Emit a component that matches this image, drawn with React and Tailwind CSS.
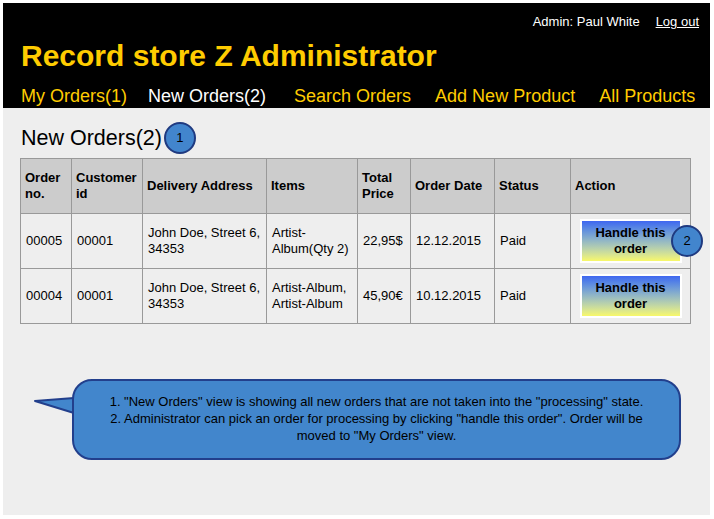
import React from 'react';

const orders = [
  { no: '00005', customer: '00001', address: ['John Doe, Street 6,', '34353'], items: ['Artist-', 'Album(Qty 2)'], price: '22,95$', date: '12.12.2015', status: 'Paid', badge: true },
  { no: '00004', customer: '00001', address: ['John Doe, Street 6,', '34353'], items: ['Artist-Album,', 'Artist-Album'], price: '45,90€', date: '10.12.2015', status: 'Paid', badge: false },
];

function Badge({ n, className = '' }) {
  return (
    <span className={`flex items-center justify-center w-[32px] h-[32px] rounded-full bg-[#4285cd] border-2 border-[#1f3a80] text-[13px] text-black ${className}`}>
      {n}
    </span>
  );
}

export default function App() {
  const th = 'border border-[#999999] px-[4px] text-left align-middle font-bold text-[13px] leading-[16px] text-black';
  const td = 'border border-[#999999] px-[5px] align-middle text-[13px] leading-[16px] text-black';

  return (
    <div className="bg-white min-h-[519px] pt-[3px] pl-[3px] pr-[4px] pb-[4px] font-['Liberation_Sans',Arial,sans-serif]">
      <div className="h-[512px] bg-[#eeeeee]">
        {/* header */}
        <div className="bg-black h-[105px] flex flex-col">
          <div className="flex justify-end gap-[16px] pr-[11px] pt-[11px] text-[13px] leading-[15px] text-white">
            <span>Admin: Paul White</span>
            <a href="#" className="underline">Log out</a>
          </div>
          <h1 className="pl-[18px] mt-[10px] text-[30px] leading-[34px] font-bold text-[#ffcc00]">Record store Z Administrator</h1>
          <nav className="flex pl-[18px] mt-[13px] text-[18px] leading-[20px] text-[#ffcc00]">
            <a href="#" className="mr-[21px]">My Orders(1)</a>
            <a href="#" className="text-white mr-[28px]">New Orders(2)</a>
            <a href="#" className="mr-[24px]">Search Orders</a>
            <a href="#" className="mr-[24px]">Add New Product</a>
            <a href="#">All Products</a>
          </nav>
        </div>

        {/* content */}
        <div className="pl-[17px]">
          <div className="flex items-center h-[50px] pt-[10px]">
            <h2 className="ml-[1px] text-[21.5px] leading-[24px] text-black">New Orders(2)</h2>
            <Badge n="1" className="ml-[2px]" />
          </div>

          <table className="border-collapse table-fixed w-[670px]">
            <colgroup>
              <col className="w-[51px]" />
              <col className="w-[71px]" />
              <col className="w-[124px]" />
              <col className="w-[91px]" />
              <col className="w-[53px]" />
              <col className="w-[84px]" />
              <col className="w-[76px]" />
              <col className="w-[120px]" />
            </colgroup>
            <thead>
              <tr className="h-[55px] bg-[#cccccc]">
                <th className={th}>Order<br />no.</th>
                <th className={th}>Customer<br />id</th>
                <th className={th}>Delivery Address</th>
                <th className={th}>Items</th>
                <th className={th}>Total<br />Price</th>
                <th className={th}>Order Date</th>
                <th className={th}>Status</th>
                <th className={th}>Action</th>
              </tr>
            </thead>
            <tbody>
              {orders.map((o) => (
                <tr key={o.no} className="h-[55px]">
                  <td className={td}>{o.no}</td>
                  <td className={td}>{o.customer}</td>
                  <td className={td}>{o.address[0]}<br />{o.address[1]}</td>
                  <td className={td}>{o.items[0]}<br />{o.items[1]}</td>
                  <td className={td}>{o.price}</td>
                  <td className={td}>{o.date}</td>
                  <td className={td}>{o.status}</td>
                  <td className="border border-[#999999] align-middle">
                    <div className="relative flex justify-center">
                      <button className="w-[102px] h-[44px] border-[2px] border-white bg-gradient-to-b from-[#3f66f0] to-[#f8f868] font-bold text-[13px] leading-[16px] text-black">
                        Handle this<br />order
                      </button>
                      {o.badge && <Badge n="2" className="absolute right-[-13px] top-[6px]" />}
                    </div>
                  </td>
                </tr>
              ))}
            </tbody>
          </table>
        </div>

        {/* callout */}
        <div className="relative ml-[69px] mt-[55px] w-[609px] h-[81px]">
          <svg className="absolute left-[-39px] top-[16px]" width="44" height="22" viewBox="0 0 44 22">
            <path d="M41 3 L2 6 L41 18 Z" fill="#4286cc" stroke="#223f8c" strokeWidth="2" strokeLinejoin="round" />
          </svg>
          <div className="relative h-full rounded-[20px] bg-[#4286cc] border-2 border-[#223f8c] flex items-center justify-center px-[22px] pb-[2px] text-center text-[13px] leading-[17px] text-black">
            <p>
              1. "New Orders" view is showing all new orders that are not taken into the "processing" state.<br />
              2. Administrator can pick an order for processing by clicking "handle this order". Order will be moved to "My Orders" view.
            </p>
          </div>
        </div>
      </div>
    </div>
  );
}
